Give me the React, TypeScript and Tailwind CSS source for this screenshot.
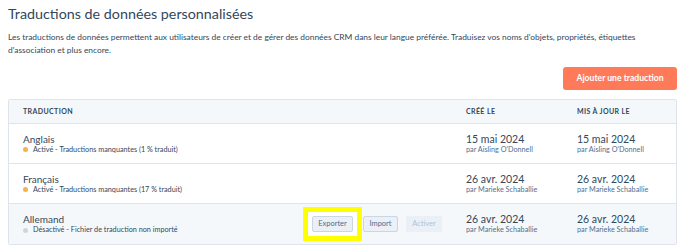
import React from "react";

const font = { fontFamily: 'Lato, "Open Sans", "Liberation Sans", sans-serif' };

function Status({ color, text }: { color: string; text: string }) {
  return (
    <div className="flex items-center gap-[5px] text-[7.25px] text-[#33475b] leading-[10px] mt-[0px]">
      <span className={`inline-block w-[5px] h-[5px] rounded-full ${color}`} />
      <span>{text}</span>
    </div>
  );
}

function DateCell({ date, by }: { date: string; by: string }) {
  return (
    <div className="flex flex-col">
      <span className="text-[10.5px] leading-[12px] text-[#33475b]">{date}</span>
      <span className="text-[7.25px] leading-[10px] text-[#516f90]">{by}</span>
    </div>
  );
}

export default function App() {
  const rows = [
    { name: "Anglais", dot: "bg-[#f5b349]", status: "Activé - Traductions manquantes (1 % traduit)", c: ["15 mai 2024", "par Aisling O'Donnell"], u: ["15 mai 2024", "par Aisling O'Donnell"], hover: false },
    { name: "Français", dot: "bg-[#f5b349]", status: "Activé - Traductions manquantes (17 % traduit)", c: ["26 avr. 2024", "par Marieke Schaballie"], u: ["26 avr. 2024", "par Marieke Schaballie"], hover: false },
    { name: "Allemand", dot: "bg-[#cbd6e2]", status: "Désactivé - Fichier de traduction non importé", c: ["26 avr. 2024", "par Marieke Schaballie"], u: ["26 avr. 2024", "par Marieke Schaballie"], hover: true },
  ];
  return (
    <div className="w-[688px] h-[250px] bg-white overflow-hidden" style={font}>
      <div className="pl-[8px] pr-[11px] pt-[4px]">
        <h1 className="text-[14.3px] leading-[20px] text-[#33475b] font-normal">Traductions de données personnalisées</h1>
        <p className="mt-[7px] text-[8.4px] leading-[13px] text-[#33475b] pr-[20px]">
          Les traductions de données permettent aux utilisateurs de créer et de gérer des données CRM dans leur langue préférée. Traduisez vos noms d'objets, propriétés, étiquettes d'association et plus encore.
        </p>
        <div className="flex justify-end mt-[10px]">
          <button className="h-[23px] w-[114px] rounded-[3px] bg-[#ff7a59] text-white text-[8.6px] font-bold">
            Ajouter une traduction
          </button>
        </div>
        <div className="mt-[9px] border border-[#dfe3eb] rounded-[2px]">
          <div className="flex items-center h-[24px] bg-[#f5f8fa] border-b border-[#dfe3eb] text-[7px] font-bold tracking-[0.4px] text-[#33475b]">
            <div className="pl-[14px] flex-1">TRADUCTION</div>
            <div className="w-[111px]">CRÉÉ LE</div>
            <div className="w-[99px]">MIS À JOUR LE</div>
          </div>
          {rows.map((r, i) => (
            <div key={i} className={`flex items-center h-[40px] ${i < 2 ? "border-b border-[#dfe3eb]" : ""} ${r.hover ? "bg-[#f5f8fa]" : "bg-white"}`}>
              <div className="pl-[14px] flex-1 flex items-center">
                <div className="flex flex-col w-[280px]">
                  <span className="text-[10px] leading-[12px] text-[#33475b]">{r.name}</span>
                  <Status color={r.dot} text={r.status} />
                </div>
                {r.hover && (
                  <div className="flex items-center">
                    <div className="border-[5px] border-[#ffff00] w-[59px] h-[34px] flex items-center justify-center bg-white">
                      <button className="h-[16px] w-[41px] rounded-[2px] bg-[#eaf0f6] border border-[#cbd6e2] text-[7.5px] text-[#506e91]">Exporter</button>
                    </div>
                    <button className="ml-[1px] h-[16px] w-[35px] rounded-[2px] bg-[#eaf0f6] border border-[#cbd6e2] text-[7.5px] text-[#506e91]">Import</button>
                    <button className="ml-[8px] h-[16px] w-[36px] rounded-[2px] bg-[#eaf0f6] border border-[#eaf0f6] text-[7.5px] text-[#b0c1d4]">Activer</button>
                  </div>
                )}
              </div>
              <div className="w-[111px]"><DateCell date={r.c[0]} by={r.c[1]} /></div>
              <div className="w-[99px]"><DateCell date={r.u[0]} by={r.u[1]} /></div>
            </div>
          ))}
        </div>
      </div>
    </div>
  );
}
